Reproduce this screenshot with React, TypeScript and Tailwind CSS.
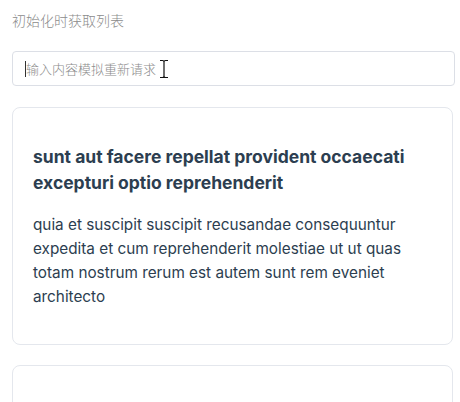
import React from "react";

export default function App() {
  return (
    <div className="w-[460px] h-[402px] overflow-hidden bg-white px-3 pt-3 font-['Inter','Noto_Sans_CJK_SC',sans-serif]">
      <div className="text-sm leading-4 font-light text-[#8c8c8c] font-['Noto_Sans_CJK_SC',sans-serif]">初始化时获取列表</div>
      <div className="relative mt-[23px] w-[443px] h-[35px] rounded-[4px] border border-[#dcdfe6] flex items-center pl-[12px]">
        <span className="w-px h-[16px] bg-[#333]" />
        <span className="text-[13px] font-light text-[#8c8c8c] font-['Noto_Sans_CJK_SC',sans-serif]">输入内容模拟重新请求</span>
        <svg className="absolute left-[145px] top-[7px]" width="12" height="20" viewBox="0 0 12 20">
          <path d="M2 1.5h2.5c.8 0 1.5.7 1.5 1.5 0-.8.7-1.5 1.5-1.5H10M6 3v14M2 18.5h2.5c.8 0 1.5-.7 1.5-1.5 0 .8.7 1.5 1.5 1.5H10" fill="none" stroke="#fff" strokeWidth="3" />
          <path d="M2 1.5h2.5c.8 0 1.5.7 1.5 1.5 0-.8.7-1.5 1.5-1.5H10M6 3v14M2 18.5h2.5c.8 0 1.5-.7 1.5-1.5 0 .8.7 1.5 1.5 1.5H10" fill="none" stroke="#111" strokeWidth="1.2" />
        </svg>
      </div>
      <div className="mt-[21px] flex flex-col gap-[20px]">
        <div className="w-[441px] rounded-lg border border-[#e4e7ed] px-5 pt-[36px] pb-[35px]">
          <h3 className="text-[17.5px] leading-[26px] font-bold text-[#2c3e50]">
            sunt aut facere repellat provident occaecati excepturi optio reprehenderit
          </h3>
          <p className="mt-[17px] text-[15.3px] leading-6 text-[#2c3e50]">
            quia et suscipit suscipit recusandae consequuntur expedita et cum reprehenderit molestiae ut ut quas totam nostrum rerum est autem sunt rem eveniet architecto
          </p>
        </div>
        <div className="w-[441px] h-[200px] rounded-lg border border-[#e4e7ed]" />
      </div>
    </div>
  );
}
